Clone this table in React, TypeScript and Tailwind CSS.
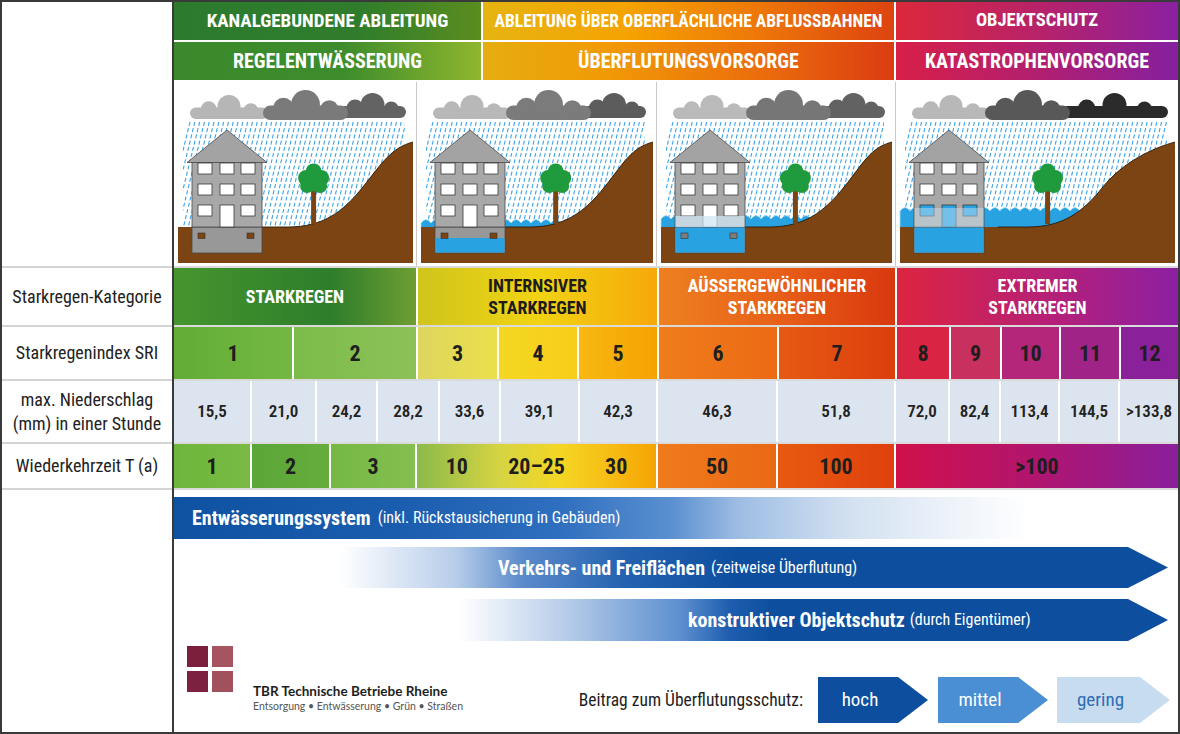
import { useId, type ReactNode } from 'react';

const NARROW = "font-['Roboto_Condensed','Liberation_Sans_Narrow','DejaVu_Sans_Condensed',sans-serif]";

function Cloud({ x, y, w, h, fill }: { x: number; y: number; w: number; h: number; fill: string }) {
  return (
    <g fill={fill}>
      <rect x={x} y={y + h * 0.52} width={w} height={h * 0.48} rx={h * 0.24} />
      <circle cx={x + w * 0.24} cy={y + h * 0.6} r={h * 0.34} />
      <circle cx={x + w * 0.5} cy={y + h * 0.48} r={h * 0.48} />
      <circle cx={x + w * 0.78} cy={y + h * 0.64} r={h * 0.3} />
    </g>
  );
}

function Scene({ w, level, shades }: { w: number; level: number; shades: string[] }) {
  const id = 'clip' + useId().replace(/[^a-zA-Z0-9]/g, '');
  const hs = 113 + (w - 240) * 0.45;
  const tx = 139 + (w - 240) * 0.3;
  const rain: ReactNode[] = [];
  for (let x = 16; x < w + 28; x += 4.8) {
    rain.push(<line key={x} x1={x} y1={40} x2={x - 26} y2={146} />);
  }
  const top = [0, 138, 134, 126][level];
  let waves = '';
  if (level > 0) {
    const end = hs + 60;
    waves = `M 4 ${top + 3}`;
    for (let x = 4; x < end; x += 10) waves += ' q 5 -7 10 0';
    waves += ` L ${end} 147 L 4 147 Z`;
  }
  const curve = `C ${hs + 35} 145 ${hs + 55} 130 ${hs + 75} 105 C ${hs + 95} 80 ${w - 25} 66 ${w - 3} 60`;
  const hill = `M 4 145 L ${hs} 145 ${curve} L ${w - 3} 181 L 4 181 Z`;
  const hillLine = `M ${hs - 30} 145 L ${hs} 145 ${curve}`;
  const windows = [
    [24, 81], [46, 81], [67, 81],
    [24, 102], [46, 102], [67, 102],
    [24, 123], [67, 123],
  ];
  const blue = '#29a2e2';

  return (
    <svg width={w} height={184} viewBox={`0 0 ${w} 184`}>
      <defs>
        <clipPath id={id}>
          <rect x={9} y={40} width={w - 20} height={106} />
        </clipPath>
      </defs>
      <Cloud x={16} y={13} w={78} h={24} fill={shades[0]} />
      <Cloud x={165} y={11} w={w - 175} h={25} fill={shades[2]} />
      <Cloud x={89} y={8} w={85} h={30} fill={shades[1]} />
      <g clipPath={`url(#${id})`} stroke="#3aa3e6" strokeWidth={1.1} strokeDasharray="4 2.4">
        {rain}
      </g>
      {level > 0 && <path d={waves} fill={blue} stroke="#a6dcf6" strokeWidth={0.8} />}
      <path d={hill} fill="#7b4412" />
      <path d={hillLine} fill="none" stroke="#2a1a0a" strokeWidth={0.9} />

      {/* building */}
      <rect x={18} y={145} width={70} height={26} fill="#989898" stroke="#4a4a4a" strokeWidth={0.8} />
      <rect x={18} y={80} width={70} height={65} fill="#a8a8a8" stroke="#4a4a4a" strokeWidth={0.8} />
      <polygon points="13,80.5 53,48 93,80.5" fill="#a3a3a3" stroke="#4a4a4a" strokeWidth={0.8} strokeLinejoin="round" />
      {windows.map(([x, y]) => (
        <rect
          key={`${x}-${y}`}
          x={x}
          y={y}
          width={14}
          height={11}
          fill={level === 3 && y === 123 ? blue : '#fff'}
          stroke="#3a3a3a"
          strokeWidth={0.8}
        />
      ))}
      <rect x={46} y={123} width={14} height={22} fill={level === 3 ? blue : '#fff'} stroke="#3a3a3a" strokeWidth={0.8} />
      {level >= 2 && (
        <rect x={18.5} y={top} width={69} height={145 - top} fill="#cfe6f3" opacity={level === 2 ? 0.75 : 0.45} />
      )}
      {level === 1 && <rect x={18.5} y={156} width={69} height={14.5} fill={blue} />}
      {level >= 2 && <rect x={18.5} y={145.5} width={69} height={25} fill={blue} />}
      {level < 3 && (
        <>
          <rect x={24} y={151} width={7} height={5.5} fill={level === 2 ? '#7d7d7d' : '#7b4412'} stroke="#333" strokeWidth={0.6} />
          <rect x={73} y={151} width={7} height={5.5} fill={level === 2 ? '#7d7d7d' : '#7b4412'} stroke="#333" strokeWidth={0.6} />
        </>
      )}

      {/* tree */}
      <rect x={tx - 2.5} y={106} width={5} height={36} fill="#7b4412" />
      <g fill="#1f9a3c">
        <circle cx={tx} cy={99} r={10.5} />
        <circle cx={tx - 7.5} cy={96} r={8} />
        <circle cx={tx + 7.5} cy={96} r={8} />
        <circle cx={tx - 6.5} cy={104} r={7} />
        <circle cx={tx + 6.5} cy={104} r={7} />
        <circle cx={tx} cy={89.5} r={8} />
      </g>
    </svg>
  );
}

const headers = [
  {
    w: 'w-[307px]',
    top: 'KANALGEBUNDENE ABLEITUNG',
    size: 'text-[19px]',
    bottom: 'REGELENTWÄSSERUNG',
    bgTop: 'bg-[linear-gradient(90deg,#2c7a2e_0%,#2f7d2c_60%,#5b8d1f_100%)]',
    bgBottom: 'bg-[linear-gradient(90deg,#3a8a2d_0%,#3d8c2c_55%,#8fb62e_100%)]',
  },
  {
    w: 'w-[411px]',
    top: 'ABLEITUNG ÜBER OBERFLÄCHLICHE ABFLUSSBAHNEN',
    size: 'text-[17.5px]',
    bottom: 'ÜBERFLUTUNGSVORSORGE',
    bgTop: 'bg-[linear-gradient(90deg,#e6b412_0%,#f5a300_35%,#ee7a08_65%,#dd4310_100%)]',
    bgBottom: 'bg-[linear-gradient(90deg,#e6ad10_0%,#f19a06_30%,#ea6a0c_70%,#da3c12_100%)]',
  },
  {
    w: 'flex-1',
    top: 'OBJEKTSCHUTZ',
    size: 'text-[18.5px]',
    bottom: 'KATASTROPHENVORSORGE',
    bgTop: 'bg-[linear-gradient(90deg,#dc283c_0%,#b82268_50%,#8a20a0_100%)]',
    bgBottom: 'bg-[linear-gradient(90deg,#d81f48_0%,#b21f70_50%,#8520a0_100%)]',
  },
];

const scenes = [
  { w: 243, level: 0, shades: ['#b6b6b6', '#7a7a7a', '#636363'] },
  { w: 240, level: 1, shades: ['#b8b8b8', '#7b7b7b', '#5c5c5c'] },
  { w: 239, level: 2, shades: ['#bababa', '#767676', '#626262'] },
  { w: 282, level: 3, shades: ['#b8b8b8', '#585858', '#2a2a2a'] },
];

const categories = [
  { w: 'w-[242px]', lines: ['STARKREGEN'], text: 'text-white', bg: 'bg-[linear-gradient(90deg,#45952f_0%,#2e7d2a_65%,#6e9e32_100%)]' },
  { w: 'w-[239px]', lines: ['INTERNSIVER', 'STARKREGEN'], text: 'text-[#1c1c1c]', bg: 'bg-[linear-gradient(90deg,#cfc51c_0%,#f1d313_50%,#f7a80a_100%)]' },
  { w: 'w-[236px]', lines: ['AÜSSERGEWÖHNLICHER', 'STARKREGEN'], text: 'text-white', bg: 'bg-[linear-gradient(90deg,#ee8020_0%,#e86018_50%,#d9380e_100%)]' },
  { w: 'flex-1', lines: ['EXTREMER', 'STARKREGEN'], text: 'text-white', bg: 'bg-[linear-gradient(90deg,#dc2440_0%,#b52078_55%,#8c1fa2_100%)]' },
];

const sri = [
  { n: '1', w: 'w-[118px]', bg: 'bg-[linear-gradient(90deg,#62ad35,#74b842)]' },
  { n: '2', w: 'w-[122px]', bg: 'bg-[linear-gradient(90deg,#7cbc4a,#8cc158)]' },
  { n: '3', w: 'w-[79px]', bg: 'bg-[linear-gradient(90deg,#ddd65e,#ebdf4c)]' },
  { n: '4', w: 'w-[78px]', bg: 'bg-[linear-gradient(90deg,#f4d823,#f8cd1a)]' },
  { n: '5', w: 'w-[78px]', bg: 'bg-[linear-gradient(90deg,#f8b812,#f5a200)]' },
  { n: '6', w: 'w-[118px]', bg: 'bg-[linear-gradient(90deg,#ef7d1c,#ec6a14)]' },
  { n: '7', w: 'w-[116px]', bg: 'bg-[linear-gradient(90deg,#e65a12,#dc3e0e)]' },
  { n: '8', w: 'w-[52px]', bg: 'bg-[#d92444]' },
  { n: '9', w: 'w-[49px]', bg: 'bg-[#c8305f]' },
  { n: '10', w: 'w-[57px]', bg: 'bg-[#b3267a]' },
  { n: '11', w: 'w-[58px]', bg: 'bg-[#a02487]' },
  { n: '12', w: 'flex-1', bg: 'bg-[#8a209a]' },
];

const rain = [
  { v: '15,5', w: 'w-[76px]' },
  { v: '21,0', w: 'w-[63px]' },
  { v: '24,2', w: 'w-[59px]' },
  { v: '28,2', w: 'w-[60px]' },
  { v: '33,6', w: 'w-[59px]' },
  { v: '39,1', w: 'w-[77px]' },
  { v: '42,3', w: 'w-[76px]' },
  { v: '46,3', w: 'w-[118px]' },
  { v: '51,8', w: 'w-[116px]' },
  { v: '72,0', w: 'w-[52px]' },
  { v: '82,4', w: 'w-[49px]' },
  { v: '113,4', w: 'w-[57px]' },
  { v: '144,5', w: 'w-[58px]' },
  { v: '>133,8', w: 'flex-1' },
];

function Label({ h, children }: { h: string; children?: ReactNode }) {
  return (
    <div className={`${h} bg-white flex items-center justify-center text-center whitespace-nowrap text-[18px] leading-[24px] text-[#222]`}>
      {children}
    </div>
  );
}

function Arrow({ w, bg, tip, className, children }: { w: string; bg: string; tip: string; className: string; children: ReactNode }) {
  return <div className={`${w} ${bg} ${tip} ${className}`}>{children}</div>;
}

export default function App() {
  return (
    <div className={`w-[1180px] h-[734px] border-2 border-[#3a3a3a] bg-white flex overflow-hidden ${NARROW}`}>
      {/* left labels */}
      <div className="w-[172px] shrink-0 border-r-2 border-[#3a3a3a] bg-[#d4d4d4] flex flex-col gap-y-[2px]">
        <Label h="h-[264px]" />
        <Label h="h-[57px]">Starkregen-Kategorie</Label>
        <Label h="h-[52px]">Starkregenindex SRI</Label>
        <Label h="h-[61px]">
          max. Niederschlag
          <br />
          (mm) in einer Stunde
        </Label>
        <Label h="h-[44px]">Wiederkehrzeit T (a)</Label>
        <div className="flex-1 bg-white" />
      </div>

      {/* main */}
      <div className="flex-1 flex flex-col gap-y-[2px] bg-[#dadada]">
        <div className="h-[264px] bg-white flex flex-col gap-y-[2px]">
          <div className="h-[38px] flex gap-x-[2px]">
            {headers.map((s) => (
              <div key={s.top} className={`${s.w} ${s.bgTop} ${s.size} flex items-center justify-center whitespace-nowrap text-white font-bold`}>
                {s.top}
              </div>
            ))}
          </div>
          <div className="h-[38px] flex gap-x-[2px]">
            {headers.map((s) => (
              <div key={s.bottom} className={`${s.w} ${s.bgBottom} flex items-center justify-center whitespace-nowrap text-white font-bold text-[20px]`}>
                {s.bottom}
              </div>
            ))}
          </div>
          <div className="flex-1 flex">
            {scenes.map((s, i) => (
              <div key={i} className={`flex ${i < 3 ? 'border-r border-[#c9c9c9]' : ''}`}>
                <Scene w={i < 3 ? s.w - 1 : s.w} level={s.level} shades={s.shades} />
              </div>
            ))}
          </div>
        </div>

        {/* Starkregen-Kategorie */}
        <div className="h-[57px] bg-white flex gap-x-[2px]">
          {categories.map((c) => (
            <div key={c.lines.join()} className={`${c.w} ${c.bg} ${c.text} flex flex-col items-center justify-center font-bold text-[18px] leading-[22px]`}>
              {c.lines.map((l) => (
                <span key={l}>{l}</span>
              ))}
            </div>
          ))}
        </div>

        {/* SRI */}
        <div className="h-[52px] bg-white flex gap-x-[2px]">
          {sri.map((c) => (
            <div key={c.n} className={`${c.w} ${c.bg} flex items-center justify-center font-bold text-[22px] text-[#1e1e1e]`}>
              {c.n}
            </div>
          ))}
        </div>

        {/* Niederschlag */}
        <div className="h-[61px] bg-white flex gap-x-[2px]">
          {rain.map((c) => (
            <div key={c.v} className={`${c.w} bg-[#dce5ef] flex items-center justify-center whitespace-nowrap font-semibold text-[17px] text-[#222]`}>
              {c.v}
            </div>
          ))}
        </div>

        {/* Wiederkehrzeit */}
        <div className="h-[44px] bg-white flex gap-x-[2px] font-bold text-[22px] text-[#1e1e1e]">
          <div className="w-[76px] bg-[linear-gradient(90deg,#6db63c,#79ba43)] flex items-center justify-center">1</div>
          <div className="w-[77px] bg-[linear-gradient(90deg,#5aa638,#66ad3c)] flex items-center justify-center">2</div>
          <div className="w-[84px] bg-[linear-gradient(90deg,#75b844,#84bf50)] flex items-center justify-center">3</div>
          <div className="w-[239px] bg-[linear-gradient(90deg,#8cba4a_0%,#d6d442_35%,#f4d624_60%,#f7b710_85%,#f5a402_100%)] flex">
            <span className="flex-1 flex items-center justify-center">10</span>
            <span className="flex-1 flex items-center justify-center">20–25</span>
            <span className="flex-1 flex items-center justify-center">30</span>
          </div>
          <div className="w-[118px] bg-[linear-gradient(90deg,#ef7b1c,#ea6814)] flex items-center justify-center">50</div>
          <div className="w-[116px] bg-[linear-gradient(90deg,#e85a10,#df400c)] flex items-center justify-center">100</div>
          <div className="flex-1 bg-[linear-gradient(90deg,#d0104a_0%,#b0156f_50%,#8a1f9c_100%)] flex items-center justify-center">&gt;100</div>
        </div>

        {/* measures */}
        <div className="flex-1 bg-white flex flex-col pt-[7px] text-white">
          <div className="h-[42px] w-[856px] bg-[linear-gradient(90deg,#0f52a2_0%,#1a5cae_26%,#2f6fbf_45%,#5a8fd0_58%,#9ebde4_66%,#d0dff0_78%,#eef3fa_91%,#ffffff_100%)] flex items-center pl-[18px] whitespace-nowrap">
            <span className="font-bold text-[20px]">Entwässerungssystem</span>
            <span className="ml-[7px] text-[16px]">(inkl. Rückstausicherung in Gebäuden)</span>
          </div>
          <Arrow
            w="w-[828px]"
            bg="bg-[linear-gradient(90deg,#ffffff_0%,#b7cdea_14%,#5b8bcb_22%,#2563b1_34%,#0d4f9e_48%,#0d4f9e_100%)]"
            tip="[clip-path:polygon(0_0,calc(100%-40px)_0,100%_50%,calc(100%-40px)_100%,0_100%)]"
            className="h-[41px] ml-[166px] mt-[8px] flex items-center pl-[158px] whitespace-nowrap"
          >
            <span className="font-bold text-[20px]">Verkehrs- und Freiflächen</span>
            <span className="ml-[6px] text-[16px]">(zeitweise Überflutung)</span>
          </Arrow>
          <Arrow
            w="w-[708px]"
            bg="bg-[linear-gradient(90deg,#ffffff_0%,#b6cce9_15%,#5d90d0_31%,#1f5eae_38%,#0d4f9e_44%,#0d4f9e_100%)]"
            tip="[clip-path:polygon(0_0,calc(100%-40px)_0,100%_50%,calc(100%-40px)_100%,0_100%)]"
            className="h-[42px] ml-[286px] mt-[11px] flex items-center pl-[228px] whitespace-nowrap"
          >
            <span className="font-bold text-[20px]">konstruktiver Objektschutz</span>
            <span className="ml-[5px] text-[16px]">(durch Eigentümer)</span>
          </Arrow>

          <div className="mt-[5px] flex justify-between">
            <div className="ml-[13px] flex items-start">
              <div className="grid grid-cols-2 gap-[4px]">
                <div className="w-[21px] h-[21px] bg-[#7b1f3c]" />
                <div className="w-[21px] h-[21px] bg-[#a6545f]" />
                <div className="w-[21px] h-[21px] bg-[#7d2141]" />
                <div className="w-[21px] h-[21px] bg-[#a0515c]" />
              </div>
              <div className="ml-[20px] mt-[37px] font-['Lato',sans-serif] whitespace-nowrap">
                <div className="font-bold text-[13.5px] leading-[16px] text-[#1e1e1e]">TBR Technische Betriebe Rheine</div>
                <div className="text-[10.5px] leading-[14px] text-[#555]">Entsorgung • Entwässerung • Grün • Straßen</div>
              </div>
            </div>
            <div className="mt-[31px] mr-[8px] flex items-center">
              <span className="text-[17.5px] text-[#1e1e1e] mr-[15px] whitespace-nowrap">Beitrag zum Überflutungsschutz:</span>
              <Arrow
                w="w-[110px]"
                bg="bg-[#0d4f9e]"
                tip="[clip-path:polygon(0_0,calc(100%-30px)_0,100%_50%,calc(100%-30px)_100%,0_100%)]"
                className="h-[46px] flex items-center justify-center pr-[26px] text-[19px] text-white"
              >
                hoch
              </Arrow>
              <Arrow
                w="w-[110px]"
                bg="bg-[#4a8ed4]"
                tip="[clip-path:polygon(0_0,calc(100%-30px)_0,100%_50%,calc(100%-30px)_100%,0_100%)]"
                className="ml-[10px] h-[46px] flex items-center justify-center pr-[26px] text-[19px] text-white"
              >
                mittel
              </Arrow>
              <Arrow
                w="w-[113px]"
                bg="bg-[#c8dcf0]"
                tip="[clip-path:polygon(0_0,calc(100%-30px)_0,100%_50%,calc(100%-30px)_100%,0_100%)]"
                className="ml-[9px] h-[46px] flex items-center justify-center pr-[26px] text-[19px] text-[#2d6db5]"
              >
                gering
              </Arrow>
            </div>
          </div>
        </div>
      </div>
    </div>
  );
}
